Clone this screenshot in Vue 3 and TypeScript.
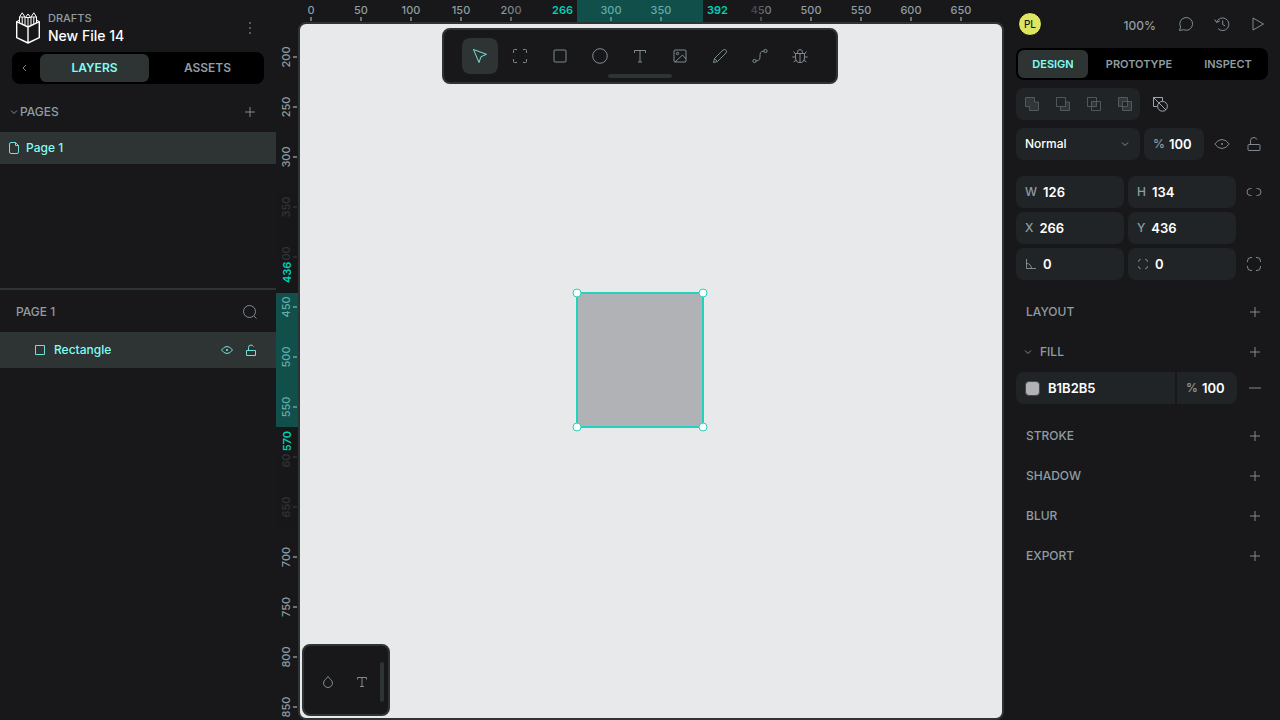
<script setup lang="ts">
import { computed, h, ref, type FunctionalComponent } from 'vue'

interface Glyph {
  d: string
  fill?: string
}

const ring = (x: number, y: number, r: number): string =>
  `M${x - r} ${y}a${r} ${r} 0 1 0 ${r * 2} 0a${r} ${r} 0 1 0 ${-r * 2} 0`

const glyphs: Record<string, Glyph> = {
  dots: { d: ring(8, 3, 0.5) + ring(8, 8, 0.5) + ring(8, 13, 0.5) },
  left: { d: 'M9 5 6 8l3 3' },
  down: { d: 'M5 6.5 8 9.5l3-3' },
  plus: { d: 'M8 3v10M3 8h10' },
  minus: { d: 'M2 8h12' },
  page: { d: 'M9.5 2.5H5Q3.5 2.5 3.5 4v8q0 1.500 1.500 1.500h6q1.500 0 1.500-1.500V5.500zv3h3' },
  search: { d: ring(7.5, 7.5, 6) + 'M12 12l2.500 2.500' },
  box: { d: 'M3.500 3.500h9v9h-9z' },
  eyeSmall: { d: 'M2.500 8Q5 4.500 8 4.500T13.500 8Q11 11.500 8 11.500T2.500 8z' + ring(8, 8, 0.7) },
  lockSmall: { d: 'M3.500 8.500h9v5h-9zM5.500 8.500V5.500q0-2.500 2.500-2.500 1.500 0 2.500 1.500' },
  move: { d: 'M1.500 1.500 14.500 6.300 9 8.700 7 14.500z' },
  board: { d: 'M5 1.500H2.500q-1 0-1 1V5M11 1.500h2.500q1 0 1 1V5M1.500 11v2.500q0 1 1 1H5M14.500 11v2.500q0 1-1 1H11' },
  rect: { d: 'M3 2h10q1 0 1 1v10q0 1-1 1H3q-1 0-1-1V3q0-1 1-1z' },
  circle: { d: ring(8, 8, 7.3) },
  text: { d: 'M2.500 5V2.500h11V5M8 2.500v11.500M6 14h4' },
  image: { d: 'M3 2h10q1 0 1 1v10q0 1-1 1H3q-1 0-1-1V3q0-1 1-1z' + ring(5.5, 5.5, 1.2) + 'M3 14 10.500 7 14 11' },
  pencil: { d: 'M1.500 14.500 2.500 10.500 11 2q1.500-1.200 2.900.1T14 5L5.500 13.500zM2.500 10.500l3 3' },
  curve: { d: ring(2.5, 13, 1.6) + ring(13.5, 3, 1.6) + 'M4 13C12 12.500 4 3.500 12 3' },
  bug: { d: 'M3.500 5.500h9V10q0 4.500-4.500 4.500T3.500 10zM5.500 5.500V4.500Q5.500 1.500 8 1.500t2.500 3v1M8 5.500v9M1.500 3.500 3.500 6M14.500 3.500 12.500 6M.300 9h3.200M12.500 9h3.200M1.500 14 4.500 12M14.500 14l-3-2' },
  comment: { d: 'M1.500 14.500 2.600 11A6.400 6.400 0 1 1 5.500 13.700z' },
  history: { d: 'M2.700 6A6.300 6.300 0 1 1 4 12.600M.800 3.500 2.500 6.500 5.800 5M8.700 4.500V8.500l2.300 1.300' },
  play: { d: 'M3 2v12L13.500 8z' },
  union: { d: 'M1.500 1.500h9v4.500h4v8.500h-9v-4h-4z', fill: 'M1.500 1.500h9v4.500h4v8.500h-9v-4h-4z' },
  subtract: { d: 'M1.500 1.500h9v9h-9zM10.500 6h4v8.500h-9v-4', fill: 'M10.500 6h4v8.500h-9v-4h5z' },
  intersect: { d: 'M1.500 1.500h9v9h-9zM5.500 5.500h9v9h-9z', fill: 'M5.500 5.500h5v5h-5z' },
  exclude: { d: 'M1.500 1.500h9v9h-9zM5.500 5.500h9v9h-9z', fill: 'M1.500 1.500h9v4h-5v5h-4zM10.500 5.500h4v9h-9v-4h5z' },
  flatten: { d: 'M5 10.500H1.500v-9h9V5' + ring(10.5, 10.3, 4.9) + 'M1.500 1.500 14 14' },
  eye: { d: 'M.800 8Q4 3.500 8 3.500T15.200 8Q12 12.500 8 12.500T.800 8z' + ring(8, 8, 0.6) },
  lock: { d: 'M3 8.500h10q1 0 1 1v4q0 1-1 1H3q-1 0-1-1v-4q0-1 1-1zM4.500 8.500V4.500Q4.500 1.500 8 1.500q2 0 3 2' },
  link: { d: 'M5.500 4.500H4.500a3.500 3.500 0 0 0 0 7h1M10.500 4.500h1a3.500 3.500 0 0 1 0 7h-1' },
  angle: { d: 'M3.500 3v9.500H13M3.500 7.500q4.500 0 5 5' },
  radius: { d: 'M6 3.500H5.500q-2 0-2 2V6M10 3.500h.500q2 0 2 2V6M3.500 10v.500q0 2 2 2H6M12.500 10v.500q0 2-2 2H10' },
  corners: { d: 'M6 1.500H5q-3.500 0-3.500 3.500v1M10 1.500h1q3.500 0 3.500 3.500v1M1.500 10v1q0 3.500 3.500 3.500h1M14.500 10v1q0 3.500-3.500 3.500h-1' },
  drop: { d: 'M8 2.500C7 4.500 3.500 6 3.500 9a4.500 4.500 0 0 0 9 0C12.500 6 9 4.500 8 2.500z' },
  textSmall: { d: 'M3.500 5.500v-2h9v2M8 3.500v9M6 12.500h4' },
}

const Icon: FunctionalComponent<{ name: string }> = (props) => {
  const glyph = glyphs[props.name]
  return h(
    'svg',
    {
      width: 16,
      height: 16,
      viewBox: '0 0 16 16',
      fill: 'none',
      stroke: 'currentColor',
      'stroke-opacity': 0.85,
      'aria-hidden': 'true',
    },
    [
      glyph.fill ? h('path', { d: glyph.fill, fill: 'currentColor', 'fill-opacity': 0.3, stroke: 'none' }) : null,
      h('path', { d: glyph.d }),
    ],
  )
}
Icon.props = ['name']

const tools = [
  { icon: 'move', label: 'Move' },
  { icon: 'board', label: 'Board' },
  { icon: 'rect', label: 'Rectangle' },
  { icon: 'circle', label: 'Ellipse' },
  { icon: 'text', label: 'Text' },
  { icon: 'image', label: 'Image' },
  { icon: 'pencil', label: 'Curve' },
  { icon: 'curve', label: 'Path' },
  { icon: 'bug', label: 'Plugins' },
]
const booleans = ['union', 'subtract', 'intersect', 'exclude']
const activeTool = ref('move')
const leftTab = ref('LAYERS')
const rightTab = ref('DESIGN')

const shape = ref({ x: 266, y: 436, w: 126, h: 134 })
const blend = ref('Normal')
const opacity = ref('100')
const rotation = ref('0')
const corner = ref('0')
const fillColor = ref('B1B2B5')
const fillOpacity = ref('100')

// Document point shown at the top left corner of the viewport frame.
const origin = { x: -13, y: 165 }

const marks = (from: number, to: number): number[] => {
  const list: number[] = []
  for (let v = from; v <= to; v += 50) list.push(v)
  return list
}
// Marks that would sit under the label of a selection edge are left out.
const columns = computed(() => {
  const { x, w } = shape.value
  return marks(0, 650)
    .filter((v) => !(v > x - 30 && v < x) && !(v > x + w && v < x + w + 30))
    .map((v) => ({ v, at: v - origin.x }))
})
const rows = marks(200, 850).map((v) => ({ v, at: v - origin.y }))

const sel = computed(() => {
  const s = shape.value
  const left = s.x - origin.x
  const top = s.y - origin.y
  return { left, top, right: left + s.w, bottom: top + s.h }
})
const handles = computed(() => {
  const s = sel.value
  return [
    [s.left, s.top],
    [s.right, s.top],
    [s.left, s.bottom],
    [s.right, s.bottom],
  ].map(([x, y]) => ({ x: x - 2, y: y - 2 }))
})

const sections = ['STROKE', 'SHADOW', 'BLUR', 'EXPORT']
</script>

<template>
  <div class="workspace">
    <aside class="side left">
      <header class="file">
        <svg class="logo" width="24" height="32" viewBox="0 0 24 32" fill="none" stroke="currentColor" stroke-linejoin="round">
          <path d="M.7 9.700 12 15l11.300-5.300v16L12 31 .7 25.700zM12 15v16" stroke-width="1.400" />
          <path d="M.7 9.700 3.500 8M23.300 9.700 20.500 8M3.500 11V5L6.200.8 9 5v8.500M3.500 5h5.500M6.200 5v7M9.300 5.500 12 2l2.700 3.500M9.300 5.500h5.400M12 5.500V15M20.500 11V5L17.800.8 15 5v8.500M15 5h5.500M17.800 5v7" />
        </svg>
        <div class="file-names">
          <span class="project">DRAFTS</span>
          <span class="file-name">New File 14</span>
        </div>
        <button class="icon-btn" type="button" aria-label="Menu"><Icon name="dots" /></button>
      </header>

      <div class="tabs left-tabs">
        <button class="back" type="button" aria-label="Collapse"><Icon name="left" /></button>
        <button
          v-for="t in ['LAYERS', 'ASSETS']"
          :key="t"
          type="button"
          class="tab"
          :class="{ active: leftTab === t }"
          @click="leftTab = t"
        >{{ t }}</button>
      </div>

      <section class="pages">
        <div class="pages-head">
          <button class="toggle" type="button"><Icon name="down" />PAGES</button>
          <button class="icon-btn" type="button" aria-label="Add page"><Icon name="plus" /></button>
        </div>
        <button class="page-row" type="button"><Icon name="page" />Page 1</button>
      </section>

      <section class="layers">
        <div class="layers-head">
          <span>PAGE 1</span>
          <button class="icon-btn" type="button" aria-label="Search layers"><Icon name="search" /></button>
        </div>
        <div class="layer-row">
          <Icon name="box" />
          <span class="layer-name">Rectangle</span>
          <button class="icon-btn" type="button" aria-label="Hide"><Icon name="eyeSmall" /></button>
          <button class="icon-btn" type="button" aria-label="Lock"><Icon name="lockSmall" /></button>
        </div>
      </section>
    </aside>

    <main class="stage">
      <svg class="ruler ruler-x">
        <defs>
          <linearGradient id="fade-l"><stop offset="0.250" stop-color="#18181a" stop-opacity="0" /><stop offset="0.700" stop-color="#18181a" stop-opacity="0.800" /></linearGradient>
          <linearGradient id="fade-r"><stop offset="0.450" stop-color="#18181a" stop-opacity="0.800" /><stop offset="0.750" stop-color="#18181a" stop-opacity="0" /></linearGradient>
        </defs>
        <g v-for="c in columns" :key="c.v">
          <text :x="c.at" y="14" class="mark">{{ c.v }}</text>
          <rect :x="c.at - 1" y="17" width="2" height="4" class="tick" />
        </g>
        <rect :x="sel.left - 100" y="0" width="100" height="22" fill="url(#fade-l)" />
        <rect :x="sel.right" y="0" width="100" height="22" fill="url(#fade-r)" />
        <rect :x="sel.left" y="0" :width="shape.w" height="22" class="range" />
        <text :x="sel.left - 4" y="14" class="edge end">{{ shape.x }}</text>
        <text :x="sel.right + 4" y="14" class="edge">{{ shape.x + shape.w }}</text>
      </svg>
      <svg class="ruler ruler-y">
        <g v-for="r in rows" :key="r.v">
          <text :transform="`translate(14 ${r.at}) rotate(-90)`" class="mark">{{ r.v }}</text>
          <rect x="17" :y="r.at - 1" width="4" height="2" class="tick" />
        </g>
        <rect x="0" :y="sel.top - 100" width="22" height="100" class="shade" />
        <rect x="0" :y="sel.bottom" width="22" height="100" class="shade" />
        <rect x="0" :y="sel.top - 32" width="16" height="22" class="mask" />
        <rect x="0" :y="sel.bottom + 4" width="16" height="22" class="mask" />
        <rect x="0" :y="sel.top" width="22" :height="shape.h" class="range" />
        <text :transform="`translate(15 ${sel.top - 10}) rotate(-90)`" class="edge">{{ shape.y }}</text>
        <text :transform="`translate(15 ${sel.bottom + 4}) rotate(-90)`" class="edge end">{{ shape.y + shape.h }}</text>
      </svg>

      <div class="viewport">
        <svg class="canvas">
          <rect :x="sel.left - 2" :y="sel.top - 2" :width="shape.w" :height="shape.h" class="shape" :fill="`#${fillColor}`" />
          <circle v-for="(p, i) in handles" :key="i" :cx="p.x" :cy="p.y" r="4" class="handle" />
        </svg>
      </div>

      <div class="toolbar">
        <button
          v-for="t in tools"
          :key="t.icon"
          type="button"
          class="tool"
          :class="{ active: activeTool === t.icon }"
          :aria-label="t.label"
          @click="activeTool = t.icon"
        ><Icon :name="t.icon" /></button>
        <button class="grip" type="button" aria-label="Toggle toolbar"></button>
      </div>

      <div class="palette">
        <button type="button" class="icon-btn" aria-label="Colors"><Icon name="drop" /></button>
        <button type="button" class="icon-btn" aria-label="Typographies"><Icon name="textSmall" /></button>
        <span class="palette-grip"></span>
      </div>
    </main>

    <aside class="side right">
      <header class="session">
        <span class="avatar">PL</span>
        <button class="zoom" type="button">100%</button>
        <button class="icon-btn" type="button" aria-label="Comments"><Icon name="comment" /></button>
        <button class="icon-btn" type="button" aria-label="History"><Icon name="history" /></button>
        <button class="icon-btn" type="button" aria-label="View mode"><Icon name="play" /></button>
      </header>

      <div class="tabs right-tabs">
        <button
          v-for="t in ['DESIGN', 'PROTOTYPE', 'INSPECT']"
          :key="t"
          type="button"
          class="tab"
          :class="{ active: rightTab === t }"
          @click="rightTab = t"
        >{{ t }}</button>
      </div>

      <div class="line bool-line">
        <div class="bools">
          <button v-for="b in booleans" :key="b" type="button" disabled :aria-label="b"><Icon :name="b" /></button>
        </div>
        <button class="icon-btn flatten" type="button" aria-label="Flatten"><Icon name="flatten" /></button>
      </div>

      <div class="line blend-line">
        <div class="select">
          <select v-model="blend" aria-label="Blend mode">
            <option>Normal</option>
            <option>Multiply</option>
            <option>Screen</option>
          </select>
          <Icon name="down" />
        </div>
        <label class="field percent"><span>%</span><input v-model="opacity" aria-label="Opacity" /></label>
        <button class="icon-btn" type="button" aria-label="Toggle layer"><Icon name="eye" /></button>
        <button class="icon-btn" type="button" aria-label="Lock layer"><Icon name="lock" /></button>
      </div>

      <div class="measures">
        <label class="field"><span>W</span><input v-model.number="shape.w" aria-label="Width" /></label>
        <label class="field"><span>H</span><input v-model.number="shape.h" aria-label="Height" /></label>
        <button class="icon-btn" type="button" aria-label="Lock proportions"><Icon name="link" /></button>
        <label class="field"><span>X</span><input v-model.number="shape.x" aria-label="X position" /></label>
        <label class="field"><span>Y</span><input v-model.number="shape.y" aria-label="Y position" /></label>
        <span></span>
        <label class="field with-icon"><Icon name="angle" /><input v-model="rotation" aria-label="Rotation" /></label>
        <label class="field with-icon"><Icon name="radius" /><input v-model="corner" aria-label="Radius" /></label>
        <button class="icon-btn" type="button" aria-label="All corners"><Icon name="corners" /></button>
      </div>

      <section class="groups">
        <div class="group"><span>LAYOUT</span><button class="icon-btn" type="button" aria-label="Add layout"><Icon name="plus" /></button></div>
        <div class="group foldable">
          <button class="toggle" type="button"><Icon name="down" />FILL</button>
          <button class="icon-btn" type="button" aria-label="Add fill"><Icon name="plus" /></button>
        </div>
        <div class="fill-line">
          <div class="field color">
            <button class="swatch" type="button" aria-label="Pick color" :style="{ backgroundColor: `#${fillColor}` }"></button>
            <input v-model="fillColor" aria-label="Fill color" />
          </div>
          <label class="field percent"><span>%</span><input v-model="fillOpacity" aria-label="Fill opacity" /></label>
          <button class="icon-btn" type="button" aria-label="Remove fill"><Icon name="minus" /></button>
        </div>
        <div v-for="s in sections" :key="s" class="group">
          <span>{{ s }}</span>
          <button class="icon-btn" type="button" :aria-label="`Add ${s.toLowerCase()}`"><Icon name="plus" /></button>
        </div>
      </section>
    </aside>
  </div>
</template>

<style>
body {
  background: #18181a;
}
</style>

<style scoped>
.workspace {
  display: grid;
  grid-template-columns: 276px minmax(0, 1fr) 276px;
  height: 100vh;
  overflow: hidden;
  background: #18181a;
  color: #8f9da3;
  font: 500 12px/16px Inter, "Liberation Sans", sans-serif;
}
.workspace * {
  box-sizing: border-box;
}
svg {
  display: block;
  flex: none;
}
button,
input,
select {
  margin: 0;
  padding: 0;
  border: 0;
  background: none;
  color: inherit;
  font: inherit;
}
button {
  display: flex;
  align-items: center;
  justify-content: center;
}
.icon-btn {
  flex: none;
  width: 24px;
  height: 24px;
}
.side {
  display: flex;
  flex-direction: column;
  min-height: 0;
}

/* file header */
.file {
  display: flex;
  align-items: center;
  gap: 8px;
  height: 52px;
  padding: 4px 14px 0 16px;
}
.logo {
  color: #fff;
}
.file-names {
  display: flex;
  flex: 1;
  flex-direction: column;
}
.project {
  font-size: 11px;
}
.file-name {
  color: #fff;
  font-size: 14px;
  line-height: 20px;
}

/* tab bars */
.tabs {
  display: grid;
  gap: 4px;
  height: 32px;
  margin: 0 12px;
  padding: 2px;
  border-radius: 8px;
  background: #000;
}
.left-tabs {
  grid-template-columns: 22px 1fr 1fr;
}
.right-tabs {
  grid-template-columns: 70fr 98fr 76fr;
  gap: 2px;
}
.tab {
  border-radius: 6px;
  font-size: 12px;
  font-weight: 600;
}
.right-tabs .tab {
  font-size: 11px;
}
.tab.active {
  background: #2e3434;
  color: #7efff5;
}

/* pages and layers */
.pages {
  display: flex;
  flex-direction: column;
  height: 206px;
  padding-top: 16px;
  border-bottom: 2px solid #2e3434;
}
.pages-head,
.layers-head {
  display: flex;
  align-items: center;
  justify-content: space-between;
  height: 24px;
  padding-right: 14px;
}
.pages-head {
  padding-left: 6px;
}
.toggle {
  font-weight: 500;
}
.toggle svg {
  margin-right: -2px;
}
.page-row {
  justify-content: flex-start;
  gap: 4px;
  height: 32px;
  margin-top: 8px;
  padding-left: 6px;
  background: #2e3434;
  color: #7efff5;
}
.layers-head {
  margin: 10px 0 8px;
  padding-left: 16px;
}
.layer-row {
  display: flex;
  align-items: center;
  height: 36px;
  padding: 0 13px 0 32px;
  background: #2e3434;
  color: #7efff5;
}
.layer-name {
  flex: 1;
  margin-left: 6px;
}

/* stage */
.stage {
  position: relative;
  display: grid;
  grid-template-columns: 22px minmax(0, 1fr);
  grid-template-rows: 22px minmax(0, 1fr);
}
.ruler {
  width: 100%;
  height: 100%;
  overflow: hidden;
}
.ruler-x {
  grid-area: 1 / 2;
}
.ruler-y {
  grid-area: 2 / 1;
}
.mark {
  fill: #8f9da3;
  font-size: 11px;
  text-anchor: middle;
}
.tick {
  fill: #6a7478;
}
.shade {
  fill: #18181a;
  fill-opacity: 0.8;
}
.mask {
  fill: #18181a;
}
.range {
  fill: #00d1b8;
  fill-opacity: 0.3;
}
.edge {
  fill: #00d1b8;
  font-size: 11px;
  font-weight: 600;
}
.edge.end {
  text-anchor: end;
}
.viewport {
  grid-area: 2 / 2;
  overflow: hidden;
  border: 2px solid #2e3434;
  border-radius: 8px;
  background: #e8e9ea;
}
.canvas {
  width: 100%;
  height: 100%;
}
.shape {
  stroke: #22d2bc;
  stroke-width: 2;
}
.handle {
  fill: #fff;
  stroke: #22d2bc;
}
.toolbar {
  position: absolute;
  top: 28px;
  left: 50%;
  display: flex;
  gap: 4px;
  padding: 8px 18px;
  border: 2px solid #2e3434;
  border-radius: 8px;
  background: #18181a;
  transform: translateX(-50%);
}
.tool {
  width: 36px;
  height: 36px;
  border-radius: 8px;
}
.tool.active {
  background: #2e3434;
  color: #7efff5;
}
.grip {
  position: absolute;
  bottom: 4px;
  left: 50%;
  width: 64px;
  height: 4px;
  border-radius: 2px;
  background: #2e3434;
  transform: translateX(-50%);
}
.palette {
  position: absolute;
  bottom: 4px;
  left: 26px;
  display: flex;
  align-items: center;
  gap: 10px;
  width: 88px;
  height: 72px;
  padding: 4px 4px 0 12px;
  border: 2px solid #2e3434;
  border-radius: 8px;
  background: #18181a;
}
.palette-grip {
  flex: none;
  width: 4px;
  height: 40px;
  margin-left: -4px;
  border-radius: 2px;
  background: #2e3434;
}

/* session header */
.session {
  display: flex;
  align-items: center;
  gap: 12px;
  height: 48px;
  padding: 0 10px 0 14px;
}
.avatar {
  width: 24px;
  height: 24px;
  margin-right: auto;
  border: 1px solid #000;
  border-radius: 50%;
  background: #dee563;
  color: #18181a;
  font-size: 10px;
  line-height: 22px;
  text-align: center;
}
.zoom {
  margin-right: 6px;
  padding-top: 4px;
}

/* design tab */
.line {
  display: flex;
  align-items: center;
  height: 32px;
  margin: 8px 14px 0 12px;
}
.bools {
  display: flex;
  width: 124px;
  height: 32px;
  margin-right: 8px;
  border-radius: 8px;
  background: #212426;
}
.bools button {
  flex: 1;
  opacity: 0.5;
}
.flatten {
  color: #b3bec2;
}
.select {
  display: grid;
  align-items: center;
  width: 124px;
  height: 32px;
  margin-right: 4px;
  border-radius: 8px;
  background: #212426;
}
.select select {
  grid-area: 1 / 1;
  width: 100%;
  height: 32px;
  padding: 0 24px 0 9px;
  appearance: none;
  color: #fff;
}
.select svg {
  grid-area: 1 / 1;
  justify-self: end;
  margin-right: 7px;
  pointer-events: none;
}
.blend-line .percent {
  margin-right: 6px;
}
.blend-line .icon-btn + .icon-btn {
  margin-left: 8px;
}
.field {
  display: flex;
  align-items: center;
  gap: 6px;
  min-width: 0;
  height: 32px;
  padding: 0 9px;
  border-radius: 8px;
  background: #212426;
}
.field input {
  flex: 1;
  width: 0;
  min-width: 0;
  color: #fff;
  font-size: 13px;
  font-weight: 600;
}
.field.with-icon {
  gap: 4px;
  padding-left: 7px;
}
.percent {
  width: 60px;
}
.field.percent {
  gap: 4px;
}
.measures {
  display: grid;
  grid-template-columns: 1fr 1fr 26px;
  align-items: center;
  gap: 4px;
  margin: 16px 14px 0 12px;
}
.measures .icon-btn {
  justify-self: end;
}
.groups {
  display: flex;
  flex-direction: column;
  gap: 8px;
  padding: 16px 13px 0 12px;
}
.group {
  display: flex;
  align-items: center;
  justify-content: space-between;
  height: 32px;
  padding-left: 10px;
}
.group.foldable {
  padding-left: 4px;
}
.group .toggle svg {
  margin-right: 4px;
}
.fill-line {
  display: flex;
  align-items: center;
  gap: 2px;
  margin: -4px 0 8px;
}
.color {
  flex: 1;
  gap: 8px;
  border-radius: 8px 0 0 8px;
}
.swatch {
  width: 15px;
  height: 15px;
  border: 1px solid #44484a;
  border-radius: 4px;
}
.fill-line .percent {
  border-radius: 0 8px 8px 0;
}
.fill-line .icon-btn {
  margin-left: 4px;
}
</style>
